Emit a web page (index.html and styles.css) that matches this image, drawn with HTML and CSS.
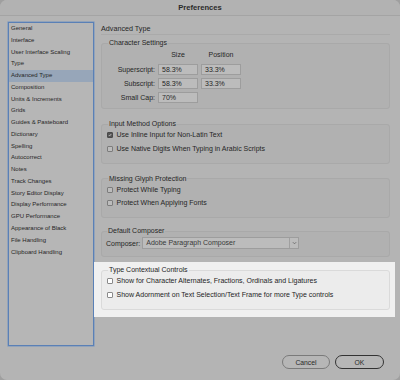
FILE: index.html
```html
<!DOCTYPE html>
<html lang="en">
<head>
    <meta charset="UTF-8">
    <meta name="viewport" content="width=device-width, initial-scale=1.0">
    <title>Preferences</title>
    <link rel="stylesheet" href="styles.css">
</head>
<body>
    <div class="dialog">
        <div class="titlebar">Preferences</div>
        <div class="main">
            <ul class="sidebar">
                <li>General</li>
                <li>Interface</li>
                <li>User Interface Scaling</li>
                <li>Type</li>
                <li class="active">Advanced Type</li>
                <li>Composition</li>
                <li>Units &amp; Increments</li>
                <li>Grids</li>
                <li>Guides &amp; Pasteboard</li>
                <li>Dictionary</li>
                <li>Spelling</li>
                <li>Autocorrect</li>
                <li>Notes</li>
                <li>Track Changes</li>
                <li>Story Editor Display</li>
                <li>Display Performance</li>
                <li>GPU Performance</li>
                <li>Appearance of Black</li>
                <li>File Handling</li>
                <li>Clipboard Handling</li>
            </ul>
            <div class="panel">
                <h1 class="heading">Advanced Type</h1>

                <fieldset class="group">
                    <legend>Character Settings</legend>
                    <div class="chars">
                        <span></span>
                        <span class="col">Size</span>
                        <span class="col">Position</span>

                        <label>Superscript:</label>
                        <span class="field">58.3%</span>
                        <span class="field">33.3%</span>

                        <label>Subscript:</label>
                        <span class="field">58.3%</span>
                        <span class="field">33.3%</span>

                        <label>Small Cap:</label>
                        <span class="field">70%</span>
                    </div>
                </fieldset>

                <fieldset class="group">
                    <legend>Input Method Options</legend>
                    <div class="row"><span class="check on"><svg viewBox="0 0 6 6"><path d="M1.2 3.1 L2.5 4.4 L4.9 1.5" fill="none" stroke="#d8d8d8" stroke-width="1.1"/></svg></span>Use Inline Input for Non-Latin Text</div>
                    <div class="row"><span class="check"></span>Use Native Digits When Typing in Arabic Scripts</div>
                </fieldset>

                <fieldset class="group">
                    <legend>Missing Glyph Protection</legend>
                    <div class="row"><span class="check"></span>Protect While Typing</div>
                    <div class="row"><span class="check"></span>Protect When Applying Fonts</div>
                </fieldset>

                <fieldset class="group composer">
                    <legend>Default Composer</legend>
                    <div class="select-row">
                        <label>Composer:</label>
                        <div class="select">
                            <span class="value">Adobe Paragraph Composer</span>
                            <span class="arrow"><svg viewBox="0 0 6 4"><path d="M1 1 L3 3 L5 1" fill="none" stroke="#555" stroke-width="0.8"/></svg></span>
                        </div>
                    </div>
                </fieldset>

                <div class="spotlight">
                    <fieldset class="group">
                        <legend>Type Contextual Controls</legend>
                        <div class="row"><span class="check"></span>Show for Character Alternates, Fractions, Ordinals and Ligatures</div>
                        <div class="row"><span class="check"></span>Show Adornment on Text Selection/Text Frame for more Type controls</div>
                    </fieldset>
                </div>
            </div>
        </div>
        <div class="footer">
            <button class="btn">Cancel</button>
            <button class="btn default">OK</button>
        </div>
    </div>
</body>
</html>
```

FILE: styles.css
```css
* {
    margin: 0;
    padding: 0;
    box-sizing: border-box;
}
html, body {
    background-color: #9f9f9f;
}
body {
    font-family: "Liberation Sans", Arial, sans-serif;
    font-size: 7px;
    color: #262626;
}
ul, li {
    list-style: none;
}
.dialog {
    width: 400px;
    height: 380px;
    background-color: #b4b4b4;
    border-radius: 7px;
    display: flex;
    flex-direction: column;
    overflow: hidden;
}
.titlebar {
    height: 16px;
    line-height: 15px;
    text-align: center;
    font-size: 7.6px;
    font-weight: bold;
    color: #2a2a2a;
    background-color: #b2b2b2;
    border-bottom: 1px solid #a4a4a4;
}
.main {
    display: flex;
    padding: 6px 10px 0 8px;
}
.sidebar {
    width: 86px;
    height: 324px;
    border: 1px solid #5a80b6;
    box-shadow: 0 0 0 0.6px #7d98be;
    background-color: #b6b6b6;
    font-size: 6px;
}
.sidebar > li {
    height: 11.77px;
    line-height: 11.77px;
    padding-left: 2px;
    white-space: nowrap;
}
.sidebar > li.active {
    background-color: #97a6b9;
}
.panel {
    flex: 1;
    margin-left: 7px;
    display: flex;
    flex-direction: column;
}
.heading {
    margin-top: 2px;
    height: 11px;
    line-height: 10px;
    font-size: 7.2px;
    font-weight: normal;
    border-bottom: 1px solid #aaaaaa;
}
.group {
    margin-top: 11px;
    border: 1px solid #a9a9a9;
    border-radius: 3px;
    background-color: #b1b1b1;
    padding: 2px 0 9px 5px;
    min-width: 0;
}
.heading + .group {
    margin-top: 4px;
}
.group > legend {
    margin-left: 1px;
    padding: 0 1px;
    font-size: 7px;
    line-height: 8px;
}
.row {
    height: 10px;
    line-height: 10px;
    display: flex;
    align-items: center;
    white-space: nowrap;
}
.row + .row {
    margin-top: 3.5px;
}
.check {
    width: 6px;
    height: 6px;
    margin-right: 3.5px;
    border: 0.7px solid #7c7c7c;
    border-radius: 1px;
    background-color: #bcbcbc;
    flex-shrink: 0;
    display: flex;
}
.check.on {
    background-color: #555555;
    border-color: #4a4a4a;
}
.check svg {
    width: 100%;
    height: 100%;
}
.chars {
    display: grid;
    grid-template-columns: 53px 40px 40px;
    grid-template-rows: 10px 11px 11px 11px;
    column-gap: 3px;
    row-gap: 3px;
    margin: 0 0 -4px -5px;
    padding-top: 2px;
}
.chars > .col {
    text-align: center;
    line-height: 8px;
}
.chars > label {
    text-align: right;
    line-height: 11px;
}
.field {
    border: 1px solid #9d9d9d;
    background-color: #bcbcbc;
    line-height: 9px;
    padding-left: 3px;
}
.group.composer {
    margin-top: 9px;
    padding: 2px 0 7px 4px;
}
.select-row {
    display: flex;
    align-items: center;
    gap: 2px;
}
.select {
    width: 157px;
    height: 12px;
    border: 1px solid #9d9d9d;
    background-color: #bcbcbc;
    display: flex;
}
.select .value {
    flex: 1;
    line-height: 10px;
    padding-left: 3px;
    color: #3a3a3a;
}
.select .arrow {
    width: 9px;
    border-left: 1px solid #a0a0a0;
    display: flex;
    align-items: center;
    justify-content: center;
}
.select .arrow svg {
    width: 5px;
    height: 4px;
}
.spotlight {
    margin: 5px -5px 0 -7px;
    padding: 4px 5px 7px 7px;
    background-color: #f0f0f0;
    color: #1e1e1e;
}
.spotlight .group {
    margin-top: 0;
    background-color: #ececec;
    border-color: #dadada;
}
.spotlight .check {
    background-color: #ffffff;
    border-color: #8a8a8a;
}
.footer {
    margin-top: auto;
    padding: 0 16px 11px 0;
    display: flex;
    justify-content: flex-end;
    gap: 5px;
}
.btn {
    width: 48px;
    height: 14px;
    border: 1px solid #7a7a7a;
    border-radius: 7px;
    background-color: #b6b6b6;
    font-family: "Liberation Sans", Arial, sans-serif;
    font-size: 6.8px;
    color: #2a2a2a;
}
.btn.default {
    width: 49px;
    border: 1.4px solid #333333;
}
```
